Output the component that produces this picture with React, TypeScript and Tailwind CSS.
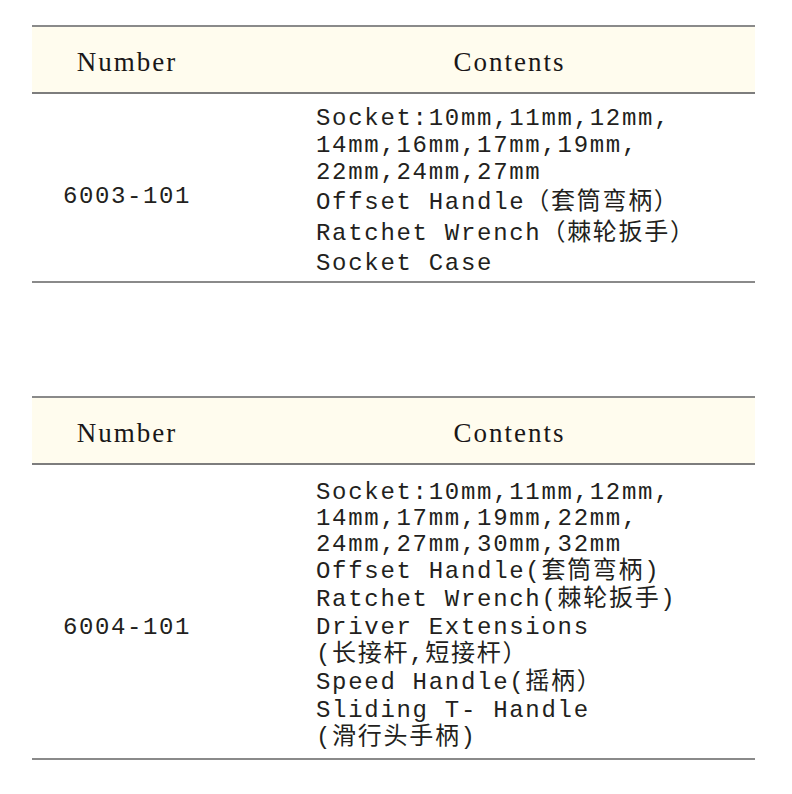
const MONO = "font-['Liberation_Mono','Noto_Sans_CJK_SC',monospace]";

type Row = { text: string; h: string };

const TABLES: { number: string; numPad: string; bodyPad: string; lines: Row[] }[] = [
  {
    number: "6003-101",
    numPad: "pt-[18px]",
    bodyPad: "pt-[11px] pb-[2px]",
    lines: [
      { text: "Socket:10mm,11mm,12mm,", h: "h-[27px]" },
      { text: "14mm,16mm,17mm,19mm,", h: "h-[27px]" },
      { text: "22mm,24mm,27mm", h: "h-[28px]" },
      { text: "Offset Handle（套筒弯柄）", h: "h-[31px]" },
      { text: "Ratchet Wrench（棘轮扳手）", h: "h-[31px]" },
      { text: "Socket Case", h: "h-[30px]" }
    ]
  },
  {
    number: "6004-101",
    numPad: "pt-[32px]",
    bodyPad: "pt-[15px] pb-[6px]",
    lines: [
      { text: "Socket:10mm,11mm,12mm,", h: "h-[26px]" },
      { text: "14mm,17mm,19mm,22mm,", h: "h-[26px]" },
      { text: "24mm,27mm,30mm,32mm", h: "h-[26px]" },
      { text: "Offset Handle(套筒弯柄)", h: "h-[28px]" },
      { text: "Ratchet Wrench(棘轮扳手)", h: "h-[28px]" },
      { text: "Driver Extensions", h: "h-[27px]" },
      { text: "(长接杆,短接杆）", h: "h-[28px]" },
      { text: "Speed Handle(摇柄）", h: "h-[28px]" },
      { text: "Sliding T- Handle", h: "h-[27px]" },
      { text: "(滑行头手柄)", h: "h-[28px]" }
    ]
  }
];

const SpecTable = ({ t }: { t: (typeof TABLES)[number] }) => (
  <div className="w-[723px] text-[#231f20]">
    <div className="flex h-[69px] items-center border-y-2 border-t-[#8a8a8a] border-b-[#7d7d7d] bg-[#fffcee] pt-[6px] font-['Liberation_Serif',serif] text-[27px] tracking-[2px] text-[#1a1718]">
      <div className="w-[190px] text-center">Number</div>
      <div className="flex-1 pl-[42px] text-center">Contents</div>
    </div>
    <div className="flex border-b-2 border-[#8a8a8a]">
      <div className={`flex w-[190px] items-center justify-center ${t.numPad} ${MONO} text-[24px] tracking-[1.6px]`}>
        {t.number}
      </div>
      <div className={`flex-1 pl-[94px] ${t.bodyPad} ${MONO} text-[24px] tracking-[1.7px]`}>
        {t.lines.map((l, i) => (
          <div key={i} className={`${l.h} flex items-center whitespace-pre`}>
            {l.text}
          </div>
        ))}
      </div>
    </div>
  </div>
);

export default function App() {
  return (
    <div className="min-h-[794px] w-[792px] bg-white pl-[32px] pt-[25px]">
      <div className="flex flex-col gap-[113px]">
        {TABLES.map((t) => (
          <SpecTable key={t.number} t={t} />
        ))}
      </div>
    </div>
  );
}
